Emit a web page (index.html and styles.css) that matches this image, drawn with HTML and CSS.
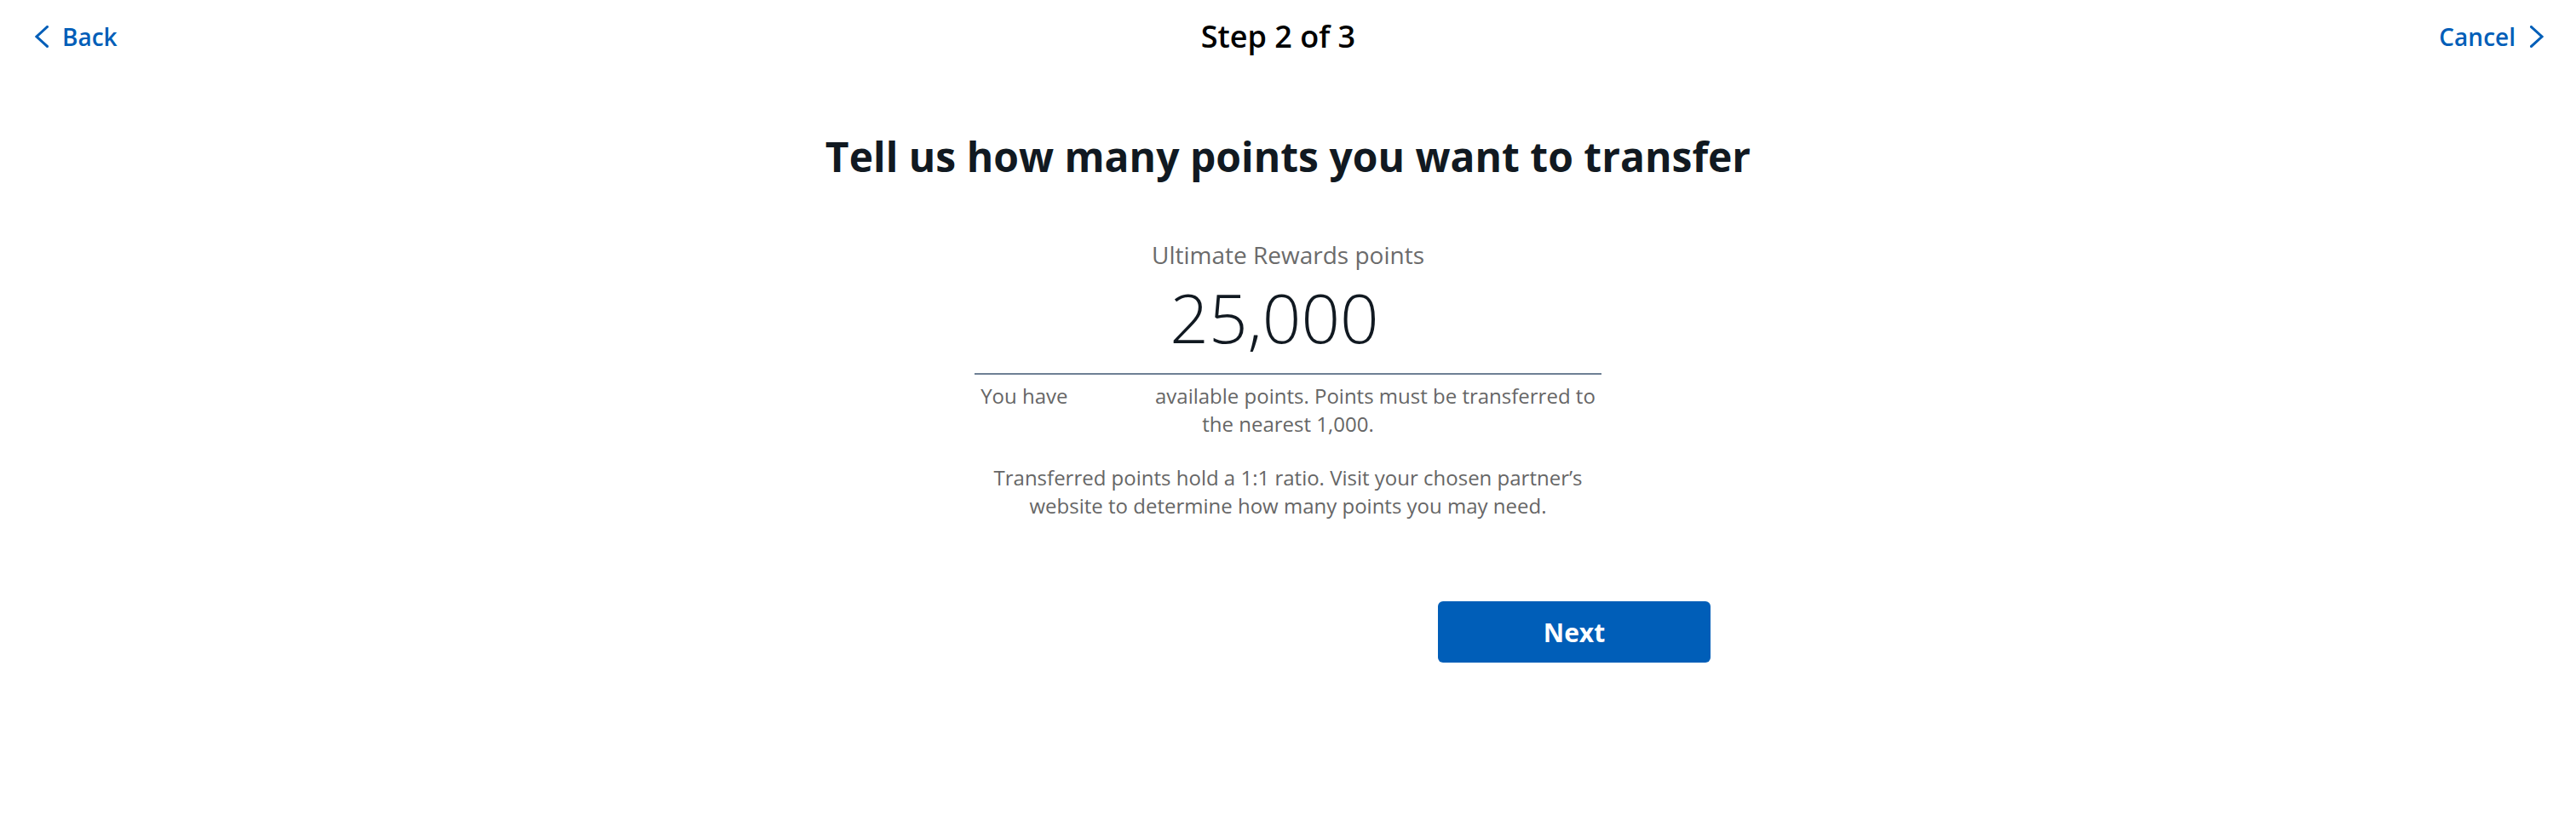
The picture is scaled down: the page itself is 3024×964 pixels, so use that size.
FILE: index.html
```html
<!DOCTYPE html>
<html lang="en">
<head>
<meta charset="utf-8">
<title>Step 2 of 3</title>
<link rel="stylesheet" href="styles.css">
</head>
<body>
<header class="topbar">
  <a class="nav-link back" href="#">
    <svg class="chev" width="16" height="26" viewBox="0 0 16 26" aria-hidden="true"><polyline points="14.5,1.5 2,13 14.5,24.5"/></svg>
    <span>Back</span>
  </a>
  <div class="step">Step 2 of 3</div>
  <a class="nav-link cancel" href="#">
    <span>Cancel</span>
    <svg class="chev" width="16" height="26" viewBox="0 0 16 26" aria-hidden="true"><polyline points="1.5,1.5 14,13 1.5,24.5"/></svg>
  </a>
</header>
<main class="content">
  <h1 class="title">Tell us how many points you want to transfer</h1>
  <section class="form">
    <div class="label">Ultimate Rewards points</div>
    <div class="amount-field">25,000</div>
    <p class="note">You have <span class="amount-gap"></span> available points. Points must be transferred to the nearest 1,000.</p>
    <p class="note note-second">Transferred points hold a 1:1 ratio. Visit your chosen partner’s website to determine how many points you may need.</p>
  </section>
  <div class="actions">
    <button class="btn-next" type="button">Next</button>
  </div>
</main>
</body>
</html>
```
FILE: styles.css
```css
* { box-sizing: border-box; }
html, body { margin: 0; padding: 0; background: #ffffff; }
body {
  font-family: "Open Sans", "Noto Sans", "Liberation Sans", sans-serif;
  color: #111921;
}
.topbar {
  display: flex;
  justify-content: space-between;
  align-items: center;
  padding: 19px 38px 0 41px;
  height: 67px;
}
.nav-link {
  display: inline-flex;
  align-items: center;
  color: #005eb8;
  text-decoration: none;
  font-size: 28px;
  font-weight: 600;
  line-height: 48px;
}
.back { gap: 16px; }
.cancel { gap: 17px; }
.chev {
  fill: none;
  stroke: #005eb8;
  stroke-width: 3;
  stroke-linecap: square;
  stroke-linejoin: miter;
  display: block;
}
.step {
  font-size: 36px;
  font-weight: 600;
  line-height: 48px;
  color: #000000;
}
.content {
  display: flex;
  flex-direction: column;
  align-items: center;
}
.title {
  margin: 85px 0 0 0;
  font-size: 48px;
  font-weight: 700;
  line-height: 64px;
  color: #111921;
}
.form {
  width: 736px;
  margin-top: 63px;
  display: flex;
  flex-direction: column;
  align-items: stretch;
  text-align: center;
}
.label {
  font-size: 28px;
  line-height: 40px;
  color: #6b6b6b;
}
.amount-field {
  margin-top: 5px;
  font-size: 80px;
  font-weight: 300;
  line-height: 96px;
  color: #111921;
  padding: 0 32px 18px 0;
  border-bottom: 2px solid #6e8094;
}
.note {
  margin: 8px 0 0 0;
  font-size: 24px;
  line-height: 33px;
  color: #666666;
}
.note-second { margin-top: 30px; }
.amount-gap {
  display: inline-block;
  width: 90px;
}
.actions {
  width: 992px;
  display: flex;
  justify-content: flex-end;
  margin-top: 96px;
}
.btn-next {
  width: 320px;
  height: 72px;
  border: none;
  border-radius: 6px;
  background: #005eb8;
  color: #ffffff;
  font-family: "Open Sans", "Noto Sans", sans-serif;
  font-size: 30px;
  font-weight: 700;
  cursor: pointer;
}
```
